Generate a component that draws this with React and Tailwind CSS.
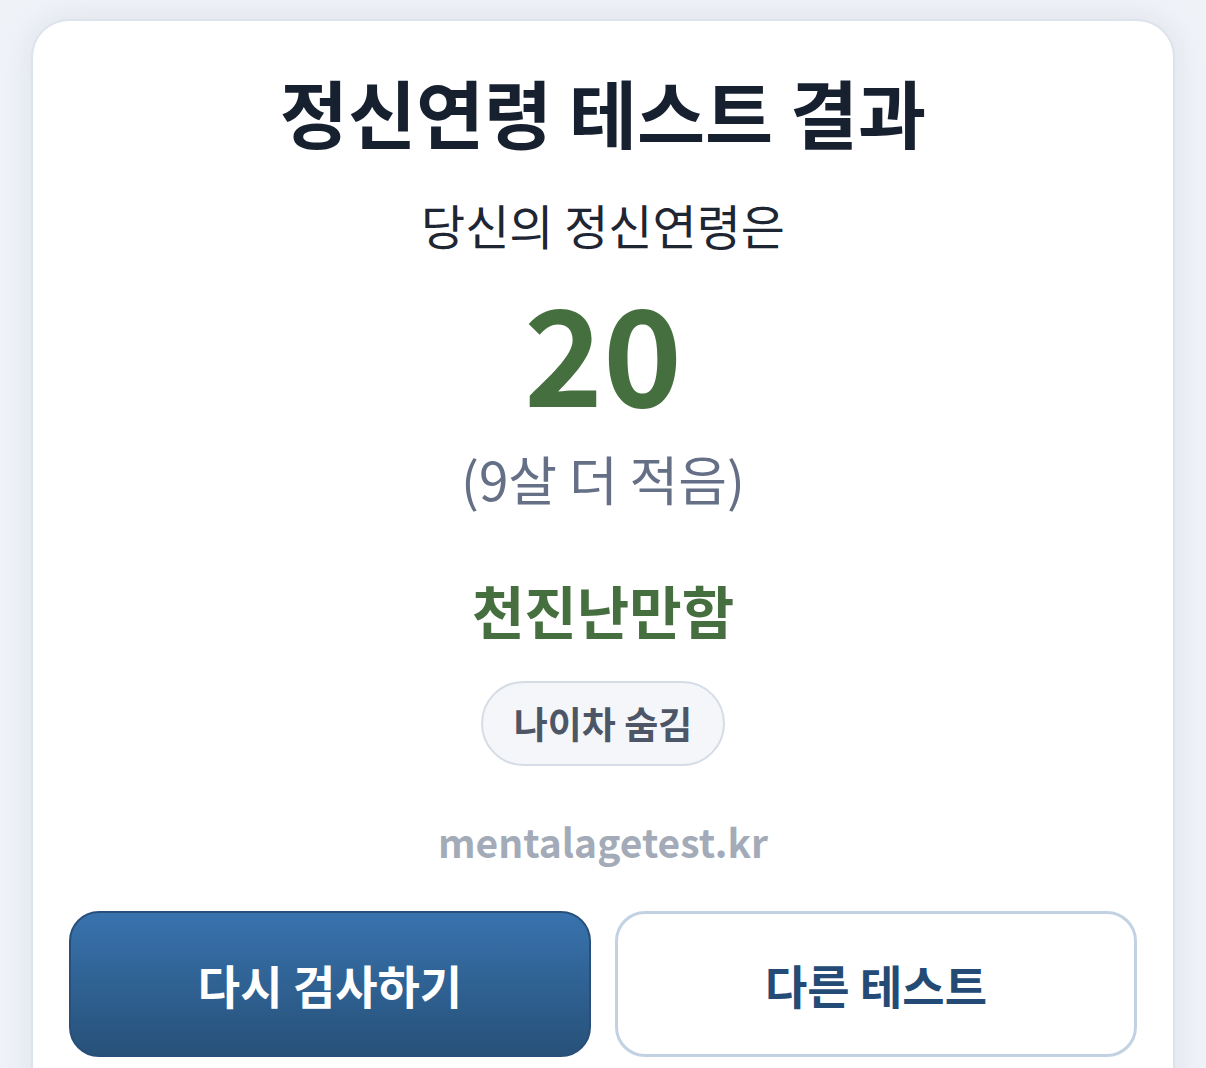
import React from 'react';

const font = { fontFamily: '"Noto Sans CJK KR", "Noto Sans", sans-serif' };

export default function App() {
  return (
    <div className="min-h-screen bg-[#eff2f7] px-[31px] pt-[19px]" style={font}>
      <div className="flex flex-col items-center rounded-t-[38px] border-2 border-b-0 border-[#dde3ec] bg-white px-[36px] pt-[53px] pb-[40px] shadow-[0_0_28px_rgba(148,163,184,0.2)]">
        <h1 className="text-[74px] font-bold leading-none text-[#17202f]">정신연령 테스트 결과</h1>
        <p className="mt-[52px] text-[48px] leading-none text-[#1f2633]">당신의 정신연령은</p>
        <div className="mt-[34px] text-[134px] font-bold leading-none text-[#466f3f]">20</div>
        <p className="mt-[36px] text-[53px] leading-none text-[#657087]">(9살 더 적음)</p>
        <p className="mt-[76px] text-[57px] font-bold leading-none text-[#466f3f]">천진난만함</p>
        <button className="mt-[43px] flex h-[85px] w-[244px] items-center justify-center rounded-full border-2 border-[#d6dce6] bg-[#f4f6fa] text-[37px] font-bold text-[#4d5666]">
          나이차 숨김
        </button>
        <p className="mt-[56px] text-[39px] font-bold leading-none text-[#a4abb8]">mentalagetest.kr</p>
        <div className="mt-[50px] grid w-full grid-cols-2 gap-[24px]">
          <button className="flex h-[146px] items-center justify-center rounded-[30px] border-2 border-[#284f79] bg-gradient-to-b from-[#3873ae] to-[#275179] text-[46px] font-bold text-white">
            다시 검사하기
          </button>
          <button className="flex h-[146px] items-center justify-center rounded-[30px] border-[3px] border-[#c2d2e3] bg-white text-[46px] font-bold text-[#244b75]">
            다른 테스트
          </button>
        </div>
      </div>
    </div>
  );
}
